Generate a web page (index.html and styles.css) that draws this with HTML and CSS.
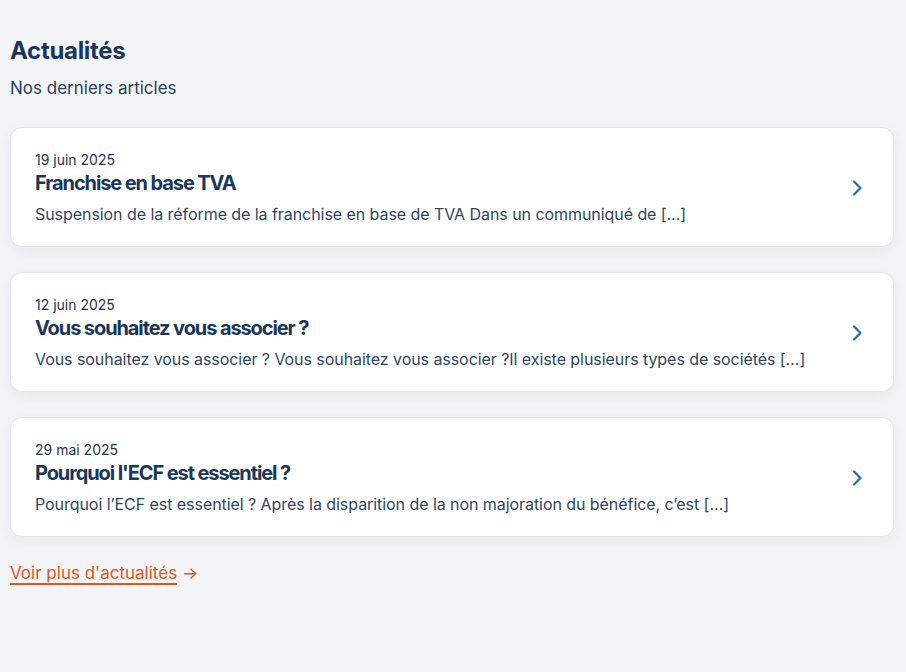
FILE: index.html
```html
<!DOCTYPE html>
<html lang="fr">
<head>
<meta charset="utf-8">
<link rel="stylesheet" href="styles.css">
</head>
<body>
<section class="news">
  <h2 class="news-title">Actualités</h2>
  <p class="news-sub">Nos derniers articles</p>
  <div class="list">
    <a class="card" href="#">
      <div class="card-body">
        <div class="date">19 juin 2025</div>
        <h3 class="card-title">Franchise en base TVA</h3>
        <p class="excerpt">Suspension de la réforme de la franchise en base de TVA Dans un communiqué de […]</p>
      </div>
      <svg class="chev" width="14" height="18" viewBox="0 0 14 18"><path d="M4 2.5 L10.5 9 L4 15.5" fill="none" stroke="#1d6fb8" stroke-width="2.2" stroke-linecap="round" stroke-linejoin="round"/></svg>
    </a>
    <a class="card" href="#">
      <div class="card-body">
        <div class="date">12 juin 2025</div>
        <h3 class="card-title">Vous souhaitez vous associer ?</h3>
        <p class="excerpt">Vous souhaitez vous associer ? Vous souhaitez vous associer ?Il existe plusieurs types de sociétés […]</p>
      </div>
      <svg class="chev" width="14" height="18" viewBox="0 0 14 18"><path d="M4 2.5 L10.5 9 L4 15.5" fill="none" stroke="#1d6fb8" stroke-width="2.2" stroke-linecap="round" stroke-linejoin="round"/></svg>
    </a>
    <a class="card" href="#">
      <div class="card-body">
        <div class="date">29 mai 2025</div>
        <h3 class="card-title">Pourquoi l'ECF est essentiel ?</h3>
        <p class="excerpt">Pourquoi l’ECF est essentiel ? Après la disparition de la non majoration du bénéfice, c’est […]</p>
      </div>
      <svg class="chev" width="14" height="18" viewBox="0 0 14 18"><path d="M4 2.5 L10.5 9 L4 15.5" fill="none" stroke="#1d6fb8" stroke-width="2.2" stroke-linecap="round" stroke-linejoin="round"/></svg>
    </a>
  </div>
  <a class="more" href="#"><span class="more-text">Voir plus d'actualités</span> →</a>
</section>
</body>
</html>
```
FILE: styles.css
```css
html, body {
  margin: 0;
  padding: 0;
  background: #f3f4f6;
}
body {
  font-family: Inter, "Noto Sans", sans-serif;
  color: #1b365d;
}
.news {
  padding: 35px 12px 40px 10px;
}
.news-title {
  margin: 0;
  font-size: 24px;
  line-height: 32px;
  font-weight: 700;
  letter-spacing: -0.3px;
  color: #1b365d;
}
.news-sub {
  margin: 9px 0 0;
  font-size: 17px;
  line-height: 25px;
  color: #2a4060;
}
.list {
  margin-top: 26px;
  display: flex;
  flex-direction: column;
  gap: 25px;
}
.card {
  display: flex;
  align-items: center;
  background: #fff;
  border: 1px solid #e3e6ea;
  border-radius: 12px;
  box-shadow: 0 4px 12px rgba(15, 30, 60, 0.06);
  padding: 22px 29px 20px 24px;
  text-decoration: none;
  color: inherit;
}
.card-body {
  flex: 1;
}
.date {
  font-size: 14px;
  line-height: 20px;
  color: #1f3350;
}
.card-title {
  margin: 1px 0 0;
  font-size: 20px;
  line-height: 24px;
  font-weight: 700;
  letter-spacing: -1.1px;
  color: #1b365d;
}
.excerpt {
  margin: 7px 0 0;
  font-size: 16px;
  line-height: 24px;
  letter-spacing: -0.06px;
  color: #2d4566;
}
.chev {
  display: block;
  flex: none;
}
.more {
  display: inline-block;
  margin-top: 24px;
  font-size: 17px;
  line-height: 25px;
  color: #e1561d;
  text-decoration: none;
}
.more-text {
  border-bottom: 2px solid #e1561d;
}
```
